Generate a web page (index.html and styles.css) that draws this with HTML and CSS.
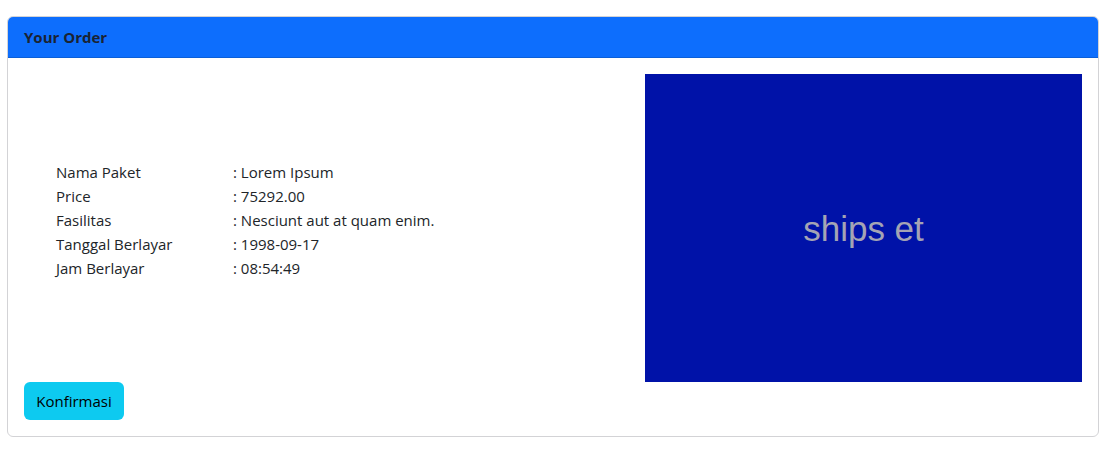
FILE: index.html
```html
<!DOCTYPE html>
<html>
<head>
<meta charset="utf-8">
<link rel="stylesheet" href="styles.css">
</head>
<body>
<div class="page">
  <div class="card">
    <div class="card-header">Your Order</div>
    <div class="card-body">
      <div class="row">
        <div class="details">
          <div class="line"><span class="label">Nama Paket</span><span class="value">: Lorem Ipsum</span></div>
          <div class="line"><span class="label">Price</span><span class="value">: 75292.00</span></div>
          <div class="line"><span class="label">Fasilitas</span><span class="value">: Nesciunt aut at quam enim.</span></div>
          <div class="line"><span class="label">Tanggal Berlayar</span><span class="value">: 1998-09-17</span></div>
          <div class="line"><span class="label">Jam Berlayar</span><span class="value">: 08:54:49</span></div>
        </div>
        <div class="photo"><span class="photo-text">ships et</span></div>
      </div>
      <button class="btn">Konfirmasi</button>
    </div>
  </div>
</div>
</body>
</html>
```
FILE: styles.css
```css
html, body {
  margin: 0;
  padding: 0;
  background: #fff;
}
body {
  font-family: "Open Sans", "Noto Sans", sans-serif;
  font-size: 15px;
  line-height: 24px;
  color: #212529;
}
.page {
  padding: 16px 15px 0 7px;
}
.card {
  border: 1px solid #d3d3d6;
  border-radius: 6px;
  overflow: hidden;
}
.card-header {
  background: #0d6efd;
  color: #1a2333;
  font-weight: 700;
  font-size: 15px;
  height: 40px;
  line-height: 40px;
  padding: 0 16px;
  border-bottom: 1px solid #0b5fd8;
}
.card-body {
  padding: 16px;
}
.row {
  display: flex;
  justify-content: space-between;
  align-items: flex-start;
}
.details {
  padding: 86px 0 0 32px;
}
.line {
  display: flex;
  height: 24px;
}
.label {
  width: 177px;
}
.photo {
  width: 437px;
  height: 308px;
  background: #0012a8;
  display: flex;
  align-items: center;
  justify-content: center;
}
.photo-text {
  font-family: "Liberation Sans", Arial, sans-serif;
  font-size: 35px;
  color: #a4a4b4;
  margin-top: 1px;
}
.btn {
  display: block;
  height: 38px;
  width: 100px;
  padding: 0;
  border: none;
  border-radius: 6px;
  background: #0dcaf0;
  color: #000;
  font-family: "Open Sans", "Noto Sans", sans-serif;
  font-size: 15px;
}
```
